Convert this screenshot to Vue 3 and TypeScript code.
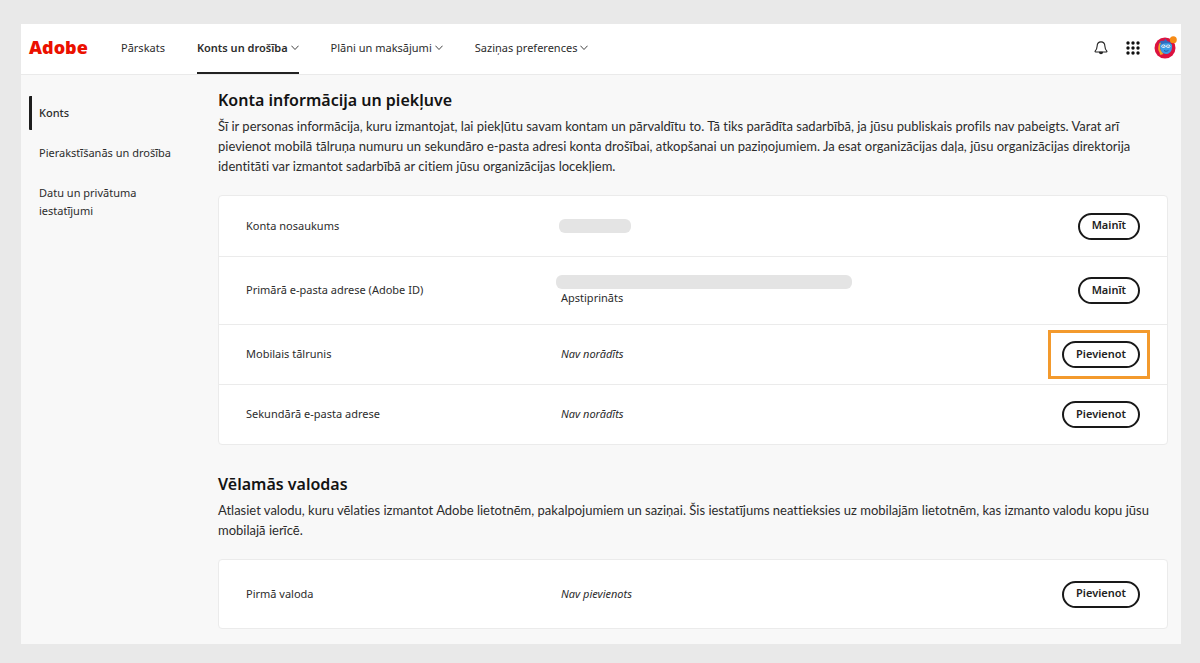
<script setup lang="ts">
interface NavItem {
  label: string
  menu: boolean
  active: boolean
}

interface Row {
  label: string
  value?: string
  note?: string
  hidden?: 'short' | 'long'
  action: string
  size: 'normal' | 'tall'
  highlighted?: boolean
}

interface Section {
  id: string
  title: string
  text: string
  rows: Row[]
}

const nav: NavItem[] = [
  { label: 'Pārskats', menu: false, active: false },
  { label: 'Konts un drošība', menu: true, active: true },
  { label: 'Plāni un maksājumi', menu: true, active: false },
  { label: 'Saziņas preferences', menu: true, active: false },
]

const side: string[] = ['Konts', 'Pierakstīšanās un drošība', 'Datu un privātuma iestatījumi']

const sections: Section[] = [
  {
    id: 'account',
    title: 'Konta informācija un piekļuve',
    text: 'Šī ir personas informācija, kuru izmantojat, lai piekļūtu savam kontam un pārvaldītu to. Tā tiks parādīta sadarbībā, ja jūsu publiskais profils nav pabeigts. Varat arī pievienot mobilā tālruņa numuru un sekundāro e-pasta adresi konta drošībai, atkopšanai un paziņojumiem. Ja esat organizācijas daļa, jūsu organizācijas direktorija identitāti var izmantot sadarbībā ar citiem jūsu organizācijas locekļiem.',
    rows: [
      { label: 'Konta nosaukums', hidden: 'short', action: 'Mainīt', size: 'normal' },
      { label: 'Primārā e-pasta adrese (Adobe ID)', hidden: 'long', note: 'Apstiprināts', action: 'Mainīt', size: 'tall' },
      { label: 'Mobilais tālrunis', value: 'Nav norādīts', action: 'Pievienot', size: 'normal', highlighted: true },
      { label: 'Sekundārā e-pasta adrese', value: 'Nav norādīts', action: 'Pievienot', size: 'normal' },
    ],
  },
  {
    id: 'languages',
    title: 'Vēlamās valodas',
    text: 'Atlasiet valodu, kuru vēlaties izmantot Adobe lietotnēm, pakalpojumiem un saziņai. Šis iestatījums neattieksies uz mobilajām lietotnēm, kas izmanto valodu kopu jūsu mobilajā ierīcē.',
    rows: [{ label: 'Pirmā valoda', value: 'Nav pievienots', action: 'Pievienot', size: 'tall' }],
  },
]

const dots: number[] = [2, 7, 12]
</script>

<template>
  <div class="frame">
    <div class="page">
      <header class="top">
        <a class="logo" href="#">Adobe</a>
        <nav class="nav">
          <a v-for="item in nav" :key="item.label" href="#" class="nav-link" :class="{ active: item.active }">
            <span>{{ item.label }}</span>
            <svg v-if="item.menu" class="chevron" width="8" height="6" viewBox="0 0 8 6" aria-hidden="true">
              <path d="M.7 1 4 4.5 7.3 1" fill="none" stroke="#444" stroke-width="1" stroke-linecap="round" stroke-linejoin="round" />
            </svg>
          </a>
        </nav>
        <div class="tools">
          <button class="tool" type="button" aria-label="Paziņojumi">
            <svg width="14" height="14" viewBox="0 0 14 14" fill="none" stroke="#222" stroke-width="1.1" stroke-linejoin="round">
              <path d="M1.7 11c-.7 0-.9-.7-.4-1.200C2.700 8.500 3 7.400 3.100 5.200 3.200 2.500 4.700.9 7 .9s3.800 1.600 3.900 4.300c.1 2.200.4 3.300 1.800 4.600.5.500.3 1.200-.4 1.200Z" />
              <path d="M5.500 11.300c.1 1 .7 1.500 1.500 1.500s1.400-.5 1.500-1.500Z" fill="#222" />
            </svg>
          </button>
          <button class="tool" type="button" aria-label="Lietotnes">
            <svg width="14" height="14" viewBox="0 0 14 14" fill="#111">
              <template v-for="y in dots" :key="y">
                <circle v-for="x in dots" :key="x" :cx="x" :cy="y" r="1.7" />
              </template>
            </svg>
          </button>
          <button class="tool" type="button" aria-label="Profils">
            <svg width="23" height="23" viewBox="0 0 23 23">
              <circle cx="11" cy="12" r="10.500" fill="#dc123f" />
              <path d="M5 8c.5-3 2.500-4 5-3l1.500-2.500L13 5l4 1.500v7l-4 4.500-6-1.500Z" fill="#3269bd" />
              <path d="M5.200 7.500 7 6.500l-1 3.500.5 4 3 4L6.500 19c-1-1-.3-2-1.500-3.500S4 11 5.200 7.500Z" fill="#f3a32b" />
              <path d="M6 9c3-2 9-2.500 12-.5.500 5-1 9-5.500 9.500C8 18 6 14 6 9Z" fill="#3c9ce6" />
              <ellipse cx="9.500" cy="10.300" rx="2.100" ry="1.700" fill="#d9effc" />
              <ellipse cx="14.200" cy="10.300" rx="2.100" ry="1.700" fill="#d9effc" />
              <path d="M8.300 10.500c.6-.8 1.500-.8 2 0m2.900 0c.6-.8 1.500-.8 2 0M10 14.500c1.500 1 3 1 4.500-.2" fill="none" stroke="#234a94" stroke-width=".9" />
              <circle cx="19.300" cy="3.700" r="3.500" fill="#f68b16" />
            </svg>
          </button>
        </div>
      </header>

      <div class="body">
        <nav class="side" aria-label="Konts">
          <a v-for="(item, i) in side" :key="item" href="#" class="side-link" :class="{ current: i === 0 }">{{ item }}</a>
        </nav>

        <main class="main">
          <section v-for="section in sections" :key="section.id" class="section">
            <h2 class="title">{{ section.title }}</h2>
            <p class="text">{{ section.text }}</p>
            <div class="card">
              <div v-for="row in section.rows" :key="row.label" class="row" :class="row.size">
                <div class="label">{{ row.label }}</div>
                <div class="value">
                  <div v-if="row.hidden" class="redacted" :class="row.hidden"></div>
                  <em v-if="row.value" class="empty">{{ row.value }}</em>
                  <span v-if="row.note" class="note">{{ row.note }}</span>
                </div>
                <div class="action" :class="{ highlighted: row.highlighted }">
                  <button class="pill" type="button">{{ row.action }}</button>
                </div>
              </div>
            </div>
          </section>
        </main>
      </div>
    </div>
  </div>
</template>

<style>
body {
  margin: 0;
  background: #e9e9e9;
}
</style>

<style scoped>
.frame {
  padding: 24px 19px 19px 21px;
  font-family: "Noto Sans", "Open Sans", sans-serif;
  font-size: 11px;
  line-height: 18px;
  color: #2c2c2c;
}
.page {
  background: #f8f8f8;
}
.top {
  display: flex;
  align-items: stretch;
  height: 50px;
  padding-left: 8px;
  background: #fff;
  border-bottom: 1px solid #eaeaea;
}
.logo {
  width: 92px;
  font-size: 18px;
  font-weight: 900;
  line-height: 47px;
  color: #eb1000;
  text-decoration: none;
}
.nav {
  display: flex;
  gap: 32px;
}
.nav-link {
  display: flex;
  align-items: center;
  gap: 3px;
  box-sizing: border-box;
  border-bottom: 2px solid transparent;
  color: #2c2c2c;
  text-decoration: none;
}
.nav-link.active {
  font-weight: 600;
  border-bottom-color: #222;
}
.tools {
  display: flex;
  align-items: center;
  margin-left: auto;
  padding-bottom: 3px;
}
.tool {
  display: flex;
  justify-content: center;
  width: 32px;
  padding: 0;
  border: 0;
  background: none;
}
.body {
  display: flex;
  padding: 13px 13px 15px 8px;
}
.side {
  flex: 0 0 189px;
  display: flex;
  flex-direction: column;
  align-items: flex-start;
  gap: 22px;
  padding-top: 8px;
}
.side-link {
  max-width: 140px;
  padding-left: 10px;
  color: #2c2c2c;
  text-decoration: none;
}
.side-link.current {
  margin-bottom: -8px;
  padding: 8px 0 8px 7px;
  border-left: 3px solid #1d1d1d;
  border-radius: 1px;
  font-weight: 500;
}
.main {
  flex: 1;
  min-width: 0;
}
.section + .section {
  margin-top: 27px;
}
.title {
  margin: 0 0 4px;
  font-size: 16px;
  font-weight: 600;
  line-height: 24px;
  color: #131313;
}
.text {
  margin: 0 0 19px;
  font-family: Lato, "Noto Sans", sans-serif;
  font-size: 13px;
  font-variant-ligatures: none;
  line-height: 20px;
}
.card {
  background: #fff;
  border: 1px solid #ebebeb;
  border-radius: 4px;
}
.row {
  display: flex;
  align-items: center;
  min-height: 60px;
  padding: 0 27px;
  box-sizing: border-box;
}
.row.tall {
  min-height: 68px;
}
.row + .row {
  border-top: 1px solid #ebebeb;
}
.label {
  flex: 0 0 315px;
  padding-bottom: 1px;
}
.value {
  flex: 1;
}
.empty {
  display: block;
  padding-bottom: 1px;
}
.note {
  display: block;
}
.redacted {
  height: 14px;
  border-radius: 6px;
  background: #e4e4e4;
}
.redacted.short {
  width: 72px;
  margin-left: -2px;
}
.redacted.long {
  width: 296px;
  margin-left: -5px;
}
.pill {
  display: block;
  height: 27px;
  padding: 0 12px 2px;
  border: 2px solid #191919;
  border-radius: 14px;
  background: #fff;
  color: #222;
  font-family: inherit;
  font-size: 11px;
  font-weight: 600;
  line-height: 20px;
}
.highlighted {
  margin-right: -10px;
  padding: 8px 7px 8px 11px;
  border: 3px solid #f39a2d;
}
</style>
